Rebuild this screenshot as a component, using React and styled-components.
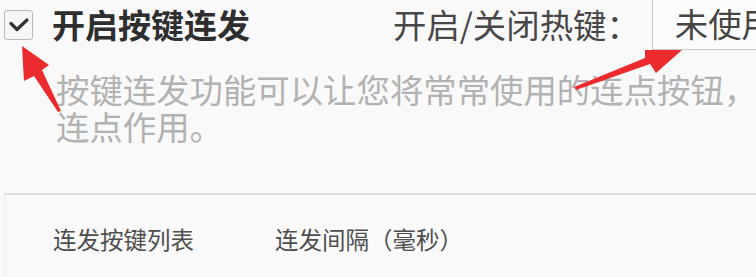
import React from "react";
import styled, { createGlobalStyle } from "styled-components";

const Global = createGlobalStyle`
  html, body { margin: 0; padding: 0; background: #f9f9f9; overflow: hidden; }
  body { width: 756px; height: 277px; font-family: "Noto Sans CJK SC", "Microsoft YaHei", sans-serif; }
`;

const Page = styled.div`
  position: relative;
  width: 756px;
  height: 277px;
  overflow: hidden;
`;

const TopRow = styled.div`
  display: flex;
  align-items: center;
  height: 48px;
  width: 756px;
`;

const CheckBox = styled.div`
  width: 29px;
  height: 30px;
  flex-shrink: 0;
  margin-left: 4px;
  margin-top: 2px;
  box-sizing: border-box;
  border: 1.5px solid #b9b9b9;
  border-radius: 3px;
  background: #f6f6f6;
  display: flex;
  align-items: center;
  justify-content: center;
`;

const Title = styled.div`
  flex-shrink: 0;
  margin-left: 19px;
  font-size: 33px;
  font-weight: 700;
  color: #2e2e2e;
  line-height: 48px;
  white-space: nowrap;
`;

const HotkeyLabel = styled.div`
  flex-shrink: 0;
  margin-left: 143px;
  font-size: 33.4px;
  color: #474747;
  line-height: 48px;
  white-space: nowrap;
`;

const HotkeyInput = styled.div`
  margin-left: 12px;
  align-self: flex-start;
  margin-top: -2px;
  height: 52px;
  width: 220px;
  flex-shrink: 0;
  box-sizing: border-box;
  border: 1.5px solid #c8c8c8;
  background: #fcfcfc;
  padding-left: 22px;
  font-size: 33.4px;
  color: #454545;
  line-height: 48px;
  white-space: nowrap;
`;

const Description = styled.div`
  margin: 22px 0 0 56px;
  font-size: 33.4px;
  line-height: 37px;
  color: #b2b2b2;
  white-space: nowrap;
`;

const Line = styled.div``;

const Table = styled.div`
  margin: 49px 0 0 4px;
  border-top: 2.5px solid #dedede;
  border-left: 1px solid #ececec;
  height: 90px;
`;

const HeaderRow = styled.div`
  display: flex;
  align-items: center;
  height: 94px;
  padding-left: 48px;
  padding-bottom: 6px;
  box-sizing: border-box;
`;

const HeaderCell = styled.div`
  font-size: 23.5px;
  color: #4e4e4e;
  width: ${(p) => p.$w}px;
  white-space: nowrap;
`;

const Overlay = styled.svg`
  position: absolute;
  left: 0;
  top: 0;
  pointer-events: none;
`;

export default function App() {
  return (
    <>
      <Global />
      <Page>
        <TopRow>
          <CheckBox>
            <svg width="22" height="16" viewBox="0 0 22 16">
              <path d="M3 6.5 L9 12.5 L19 3" fill="none" stroke="#333" strokeWidth="3.2" strokeLinecap="round" strokeLinejoin="round" />
            </svg>
          </CheckBox>
          <Title>开启按键连发</Title>
          <HotkeyLabel>开启/关闭热键：</HotkeyLabel>
          <HotkeyInput>未使用</HotkeyInput>
        </TopRow>
        <Description>
          <Line>按键连发功能可以让您将常常使用的连点按钮，</Line>
          <Line>连点作用。</Line>
        </Description>
        <Table>
          <HeaderRow>
            <HeaderCell $w={222}>连发按键列表</HeaderCell>
            <HeaderCell $w={260}>连发间隔（毫秒）</HeaderCell>
          </HeaderRow>
        </Table>
        <Overlay width="756" height="277" viewBox="0 0 756 277">
          <polygon
            points="22,46 49,65 42,70 61,111 58,112 34,76 24,81"
            fill="#ec2b2f"
          />
          <polygon
            points="682,50 656,73 650,64 576,90 574,87 645,58 645,50"
            fill="#ec2b2f"
          />
        </Overlay>
      </Page>
    </>
  );
}
